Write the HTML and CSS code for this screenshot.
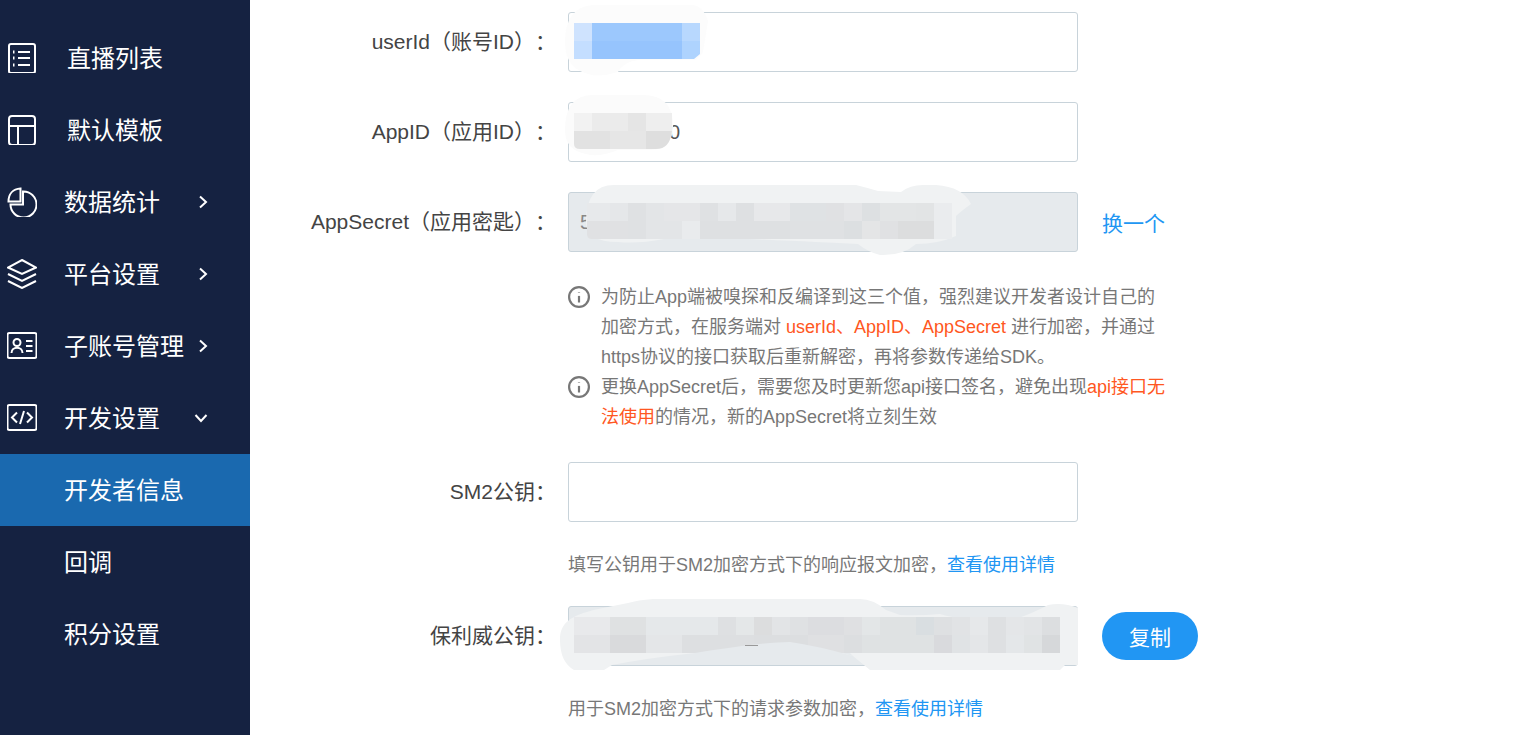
FILE: index.html
```html
<!DOCTYPE html>
<html lang="zh-CN">
    <head>
        <title>开发者信息</title>
        <meta charset="utf-8">
        <link rel="stylesheet" href="styles.css">
    </head>
    <body>
        <aside class="sidebar">
            <a class="nav-item indent">
                <svg class="nav-icon" viewBox="0 0 30 30"><rect x="2" y="1" width="26" height="29" rx="2"/><path d="M11 9h12M11 15h12M11 22h12"/><path class="dot" d="M6 9h1.500M6 15h1.500M6 22h1.500"/></svg>
                <span>直播列表</span>
            </a>
            <a class="nav-item indent">
                <svg class="nav-icon" viewBox="0 0 30 30"><rect x="2" y="1" width="26" height="29" rx="3"/><path d="M2 11h26M11 11v19"/></svg>
                <span>默认模板</span>
            </a>
            <a class="nav-item">
                <svg class="nav-icon" viewBox="0 0 30 30"><path d="M16 4.500A13 13 0 1 1 3.500 17.500H16z"/><path d="M1.500 14.500C1.500 7 6 2 13.500 1.500v13z"/></svg>
                <span>数据统计</span>
                <svg class="chevron" viewBox="0 0 10 14"><path d="M2 1.500 8 7l-6 5.500"/></svg>
            </a>
            <a class="nav-item">
                <svg class="nav-icon" viewBox="0 0 30 30"><path d="M15 1 29 8.500 15 15 1 8.500z"/><path d="M1 15l14 7 14-7M1 22l14 7 14-7"/></svg>
                <span>平台设置</span>
                <svg class="chevron" viewBox="0 0 10 14"><path d="M2 1.500 8 7l-6 5.500"/></svg>
            </a>
            <a class="nav-item">
                <svg class="nav-icon" viewBox="0 0 30 30"><rect x="0.500" y="2" width="29" height="25" rx="2"/><circle cx="10" cy="11.500" r="3.500"/><path d="M4.500 22c0-7 11-7 11 0M19 10h6.500M19 15h6.500M19 20h6.500"/></svg>
                <span>子账号管理</span>
                <svg class="chevron" viewBox="0 0 10 14"><path d="M2 1.500 8 7l-6 5.500"/></svg>
            </a>
            <a class="nav-item">
                <svg class="nav-icon" viewBox="0 0 30 30"><rect x="0.500" y="2" width="29" height="25" rx="2"/><path d="M10 9.500 5 14.500l5 5M20 9.500l5 5-5 5M17 8l-4 13"/></svg>
                <span>开发设置</span>
                <svg class="chevron open" viewBox="0 0 14 10"><path d="M1.500 2 7 8l5.500-6"/></svg>
            </a>
            <a class="nav-item sub active"><span>开发者信息</span></a>
            <a class="nav-item sub"><span>回调</span></a>
            <a class="nav-item sub"><span>积分设置</span></a>
        </aside>

        <main class="content">
            <div class="form-row">
                <label class="form-label">userId（账号ID）：</label>
                <div class="field">
                    <svg class="mask" viewBox="0 0 510 60">
                        <path fill="#fcfcfc" d="M-3 30Q-3 -5 25 -7H125Q135 -6 140 9L135 40 128 48H70Q55 50 50 60 30 66 20 62-3 56-3 30z"/>
                        <path fill="#cfe3fe" d="M6 11h18v18H6z"/><path fill="#c4deff" d="M6 29h18v18H6z"/>
                        <path fill="#9cc8fd" d="M24 11h90v18H24z"/><path fill="#96c4fd" d="M24 29h90v18H24z"/>
                        <path fill="#b8d8fe" d="M114 11h18v18H114z"/><path fill="#aed3fe" d="M114 29h18v13l-6 5H114z"/>
                    </svg>
                </div>
            </div>
            <div class="form-row">
                <label class="form-label">AppID（应用ID）：</label>
                <div class="field">
                    <span class="value-tail">0</span>
                    <svg class="mask" viewBox="0 0 510 60">
                        <path fill="#fbfbfb" d="M-3 28Q-3 -7 25 -7H75Q105 -7 105 24 105 47 82 48H50Q30 56 18 52-3 48-3 28z"/>
                        <path fill="#f2f2f2" d="M6 11h18v18H6z"/><path fill="#ebebeb" d="M24 11h36v18H24z"/>
                        <path fill="#e5e5e5" d="M60 11h18v18H60z"/><path fill="#eeeeee" d="M78 11h26v18H78z"/>
                        <path fill="#e2e2e2" d="M6 29h36v18H12q-6 0-6-5z"/><path fill="#e6e6e6" d="M42 29h36v18H42z"/>
                        <path fill="#dedede" d="M78 29h26q-2 18-16 18H78z"/>
                    </svg>
                </div>
            </div>
            <div class="form-row">
                <label class="form-label">AppSecret（应用密匙）：</label>
                <div class="field disabled">
                    <span class="value">5</span>
                    <svg class="mask" viewBox="0 0 510 60">
                        <path fill="#f0f2f3" d="M18 30Q18 -7 46 -7H288Q300 -4 310 -1L333 0Q342 -7 355 -7H368Q395 -5 403 12 392 20 388 24V44Q370 52 348 52 335 64 312 63 300 60 290 52 250 50 180 47H96Q70 52 50 50 18 50 18 30z"/>
                        <path fill="#e7e9eb" d="M19 11h23v18H19z"/><path fill="#e5e7e9" d="M42 11h18v18H42z"/><path fill="#dfe1e3" d="M60 11h18v18H60z"/>
                        <path fill="#e3e5e7" d="M78 11h18v18H78z"/><path fill="#e5e6e8" d="M96 11h36v18H96z"/><path fill="#dfe1e3" d="M132 11h18v18H132z"/>
                        <path fill="#e6e8ea" d="M150 11h18v18H150z"/><path fill="#dee0e2" d="M168 11h18v18H168z"/><path fill="#e7e8ea" d="M186 11h36v18H186z"/>
                        <path fill="#dfe2e4" d="M222 11h36v18H222z"/><path fill="#e0e1e3" d="M258 11h18v18H258z"/><path fill="#e4e5e7" d="M276 11h18v18H276z"/>
                        <path fill="#dde0e2" d="M294 11h18v18H294z"/><path fill="#e3e5e6" d="M312 11h36v18H312z"/><path fill="#e2e4e5" d="M348 11h18v18H348z"/>
                        <path fill="#e0e1e3" d="M19 29h41v18H24q-5 0-5-5z"/><path fill="#dfe1e3" d="M60 29h18v18H60z"/><path fill="#e3e5e7" d="M78 29h36v18H78z"/>
                        <path fill="#e9ebed" d="M114 29h18v18H114z"/><path fill="#dee0e2" d="M132 29h90v18H132z"/><path fill="#dfe1e3" d="M222 29h54v18H222z"/>
                        <path fill="#dcdfe1" d="M276 29h18v18H276z"/><path fill="#e4e5e6" d="M294 29h18v18H294z"/><path fill="#e0e1e3" d="M312 29h18v18H312z"/>
                        <path fill="#dcddde" d="M330 29h36v18H330z"/>
                        <path fill="#eaecee" d="M366 11h18v36H366z"/>
                    </svg>
                </div>
                <a class="link swap">换一个</a>
            </div>

            <div class="tips">
                <div class="tip">
                    <svg class="tip-icon" viewBox="0 0 20 20"><circle cx="10" cy="10" r="9"/><path d="M10 9v6"/><path class="dot" d="M10 5.500v.5"/></svg>
                    <p>为防止App端被嗅探和反编译到这三个值，强烈建议开发者设计自己的加密方式，在服务端对 <em>userId、AppID、AppSecret</em> 进行加密，并通过https协议的接口获取后重新解密，再将参数传递给SDK。</p>
                </div>
                <div class="tip">
                    <svg class="tip-icon" viewBox="0 0 20 20"><circle cx="10" cy="10" r="9"/><path d="M10 9v6"/><path class="dot" d="M10 5.500v.5"/></svg>
                    <p>更换AppSecret后，需要您及时更新您api接口签名，避免出现<em>api接口无法使用</em>的情况，新的AppSecret将立刻生效</p>
                </div>
            </div>

            <div class="form-row with-hint">
                <label class="form-label">SM2公钥：</label>
                <div class="field"></div>
            </div>
            <p class="hint">填写公钥用于SM2加密方式下的响应报文加密，<a class="link">查看使用详情</a></p>

            <div class="form-row with-hint">
                <label class="form-label">保利威公钥：</label>
                <div class="field disabled">
                    <svg class="mask" viewBox="0 0 510 60">
                        <path fill="#f0f2f3" d="M-8 34C-8 18 0 10 30 3L60 -3Q70 -6 85 -7H292Q305 -7 318 4L332 9Q352 10 372 8 392 14 432 16 452 14 480 -1 495 -4 510 2V59H497L492 64H302L285 50Q250 40 222 36 195 36 127 47 80 52 44 59L36 64H6Q-8 56-8 34z"/>
                        <path fill="#e8e9eb" d="M6 11h36v18H6z"/><path fill="#dfe1e2" d="M42 11h36v18H42z"/><path fill="#e5e8ea" d="M78 11h72v18H78z"/>
                        <path fill="#dee0e2" d="M150 11h18v18H150z"/><path fill="#e4e7e8" d="M168 11h18v18H168z"/><path fill="#dcddde" d="M186 11h18v18H186z"/>
                        <path fill="#e2e4e6" d="M204 11h18v18H204z"/><path fill="#dfe1e3" d="M222 11h18v18H222z"/><path fill="#dcdde0" d="M240 11h36v18H240z"/>
                        <path fill="#dfe0e2" d="M276 11h18v18H276z"/><path fill="#e3e6e7" d="M294 11h18v18H294z"/><path fill="#dfe2e3" d="M312 11h36v18H312z"/>
                        <path fill="#d9dee1" d="M348 11h18v18H348z"/><path fill="#dee0e2" d="M366 11h18v18H366z"/><path fill="#e1e3e5" d="M384 11h18v18H384z"/>
                        <path fill="#e6e8ea" d="M402 11h18v18H402z"/><path fill="#dee0e2" d="M420 11h18v18H420z"/><path fill="#e4e6e8" d="M438 11h18v18H438z"/>
                        <path fill="#e2e4e6" d="M456 11h18v18H456z"/><path fill="#dcdee0" d="M474 11h18v18H474z"/>
                        <path fill="#e3e4e6" d="M6 29h36v18H6z"/><path fill="#d9dadc" d="M42 29h36v18H42z"/><path fill="#e4e6e8" d="M78 29h36v18H78z"/>
                        <path fill="#dddfe1" d="M114 29h72v18H114z"/><path fill="#dcdee0" d="M186 29h54v18H186z"/><path fill="#dfe0e2" d="M240 29h36v18H240z"/>
                        <path fill="#dcdee0" d="M276 29h18v18H276z"/><path fill="#dfe2e3" d="M294 29h72v18H294z"/><path fill="#d9dadd" d="M366 29h18v18H366z"/>
                        <path fill="#e0e3e5" d="M384 29h18v18H384z"/><path fill="#e4e6e8" d="M402 29h18v18H402z"/><path fill="#dee0e2" d="M420 29h18v18H420z"/>
                        <path fill="#e4e7e9" d="M438 29h18v18H438z"/><path fill="#e0e3e4" d="M456 29h18v18H456z"/><path fill="#d6d8da" d="M474 29h18v18H474z"/>
                        <path fill="#e6eaed" d="M127 47Q195 36 222 36 250 40 285 50L282 47z"/>
                    </svg>
                    <span class="value-dash"></span>
                </div>
                <button class="copy-btn">复制</button>
            </div>
            <p class="hint">用于SM2加密方式下的请求参数加密，<a class="link">查看使用详情</a></p>
        </main>
    </body>
</html>
```

FILE: styles.css
```css
html, body {
    margin: 0;
    height: 735px;
    overflow: hidden;
}
body {
    display: flex;
    background: #fff;
    font-family: "Liberation Sans", "Noto Sans CJK SC", sans-serif;
    text-spacing-trim: space-all;
}
.sidebar {
    width: 250px;
    flex: none;
    padding-top: 22px;
    box-sizing: border-box;
    background: #152241;
}
.nav-item {
    display: flex;
    align-items: center;
    height: 72px;
    padding-left: 7px;
    color: #fff;
    font-size: 24px;
}
.nav-item > span {
    margin-left: 27px;
    padding-bottom: 4px;
}
.nav-item.indent > span {
    margin-left: 30px;
}
.nav-item.sub {
    padding-left: 64px;
}
.nav-item.sub > span {
    margin-left: 0;
}
.nav-item.active {
    background: #1a69af;
}
.nav-icon {
    width: 30px;
    height: 30px;
    flex: none;
    fill: none;
    stroke: #fff;
    stroke-width: 2;
}
.nav-icon .dot {
    stroke-width: 3;
}
.chevron {
    position: absolute;
    left: 198px;
    width: 10px;
    height: 14px;
    fill: none;
    stroke: #fff;
    stroke-width: 2;
}
.chevron.open {
    left: 194px;
    width: 14px;
    height: 10px;
}
.content {
    flex: 1;
    padding-top: 12px;
}
.form-row {
    display: flex;
    align-items: center;
    height: 60px;
    margin-bottom: 30px;
}
.form-row.with-hint {
    margin-bottom: 28px;
}
.form-label {
    width: 306px;
    padding-right: 12px;
    padding-bottom: 4px;
    flex: none;
    text-align: right;
    color: #444;
    font-size: 21px;
    white-space: nowrap;
}
.field {
    position: relative;
    width: 510px;
    height: 60px;
    flex: none;
    box-sizing: border-box;
    border: 1px solid #c8d3da;
    border-radius: 3px;
    color: #888;
    font-size: 20px;
    line-height: 58px;
}
.field.disabled {
    background: #e6eaed;
}
.value {
    padding-left: 11px;
}
.value-tail {
    padding-left: 100px;
    color: #555;
}
.value-dash {
    position: absolute;
    left: 176px;
    top: 38px;
    width: 13px;
    height: 1px;
    background: #999;
}
.mask {
    position: absolute;
    left: -1px;
    top: -1px;
    width: 510px;
    height: 60px;
    overflow: visible;
}
.link {
    color: #2196f3;
}
.swap {
    margin-left: 24px;
    font-size: 21px;
}
.copy-btn {
    width: 96px;
    height: 48px;
    margin-left: 24px;
    border: 0;
    border-radius: 24px;
    background: #2196f3;
    color: #fff;
    font: inherit;
    font-size: 21px;
}
.tips {
    margin: 0 0 30px 318px;
    color: #777;
    font-size: 18px;
    line-height: 30px;
}
.tip {
    display: flex;
    width: 600px;
}
.tip p {
    margin: 0;
    width: 568px;
}
.tip em {
    font-style: normal;
    color: #ff5722;
}
.tip-icon {
    width: 22px;
    height: 22px;
    margin: 4px 11px 0 0;
    flex: none;
    fill: none;
    stroke: #777;
    stroke-width: 2;
}
.hint {
    height: 30px;
    margin: 0 0 26px 318px;
    color: #777;
    font-size: 18px;
    line-height: 30px;
}
```
